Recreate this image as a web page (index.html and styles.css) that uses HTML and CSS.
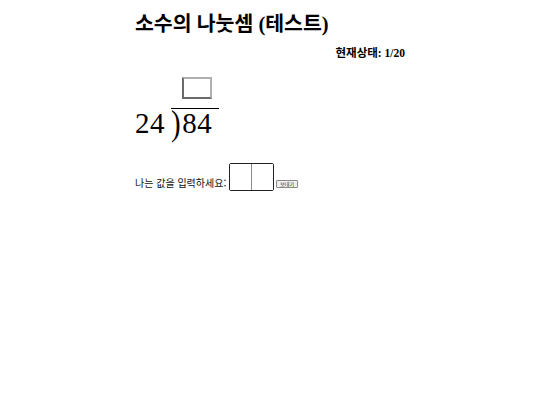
FILE: index.html
```html
<!DOCTYPE html>
<html lang="ko">
<head>
<meta charset="utf-8">
<link rel="stylesheet" href="styles.css">
</head>
<body>
<div class="page">
  <h1 class="title">소수의 나눗셈 (테스트)</h1>
  <div class="status">현재상태: 1/20</div>
  <div class="division">
    <input class="quotient" type="text">
    <div class="problem"><span class="divisor">24</span><span class="bracket"><span class="paren">)</span>84</span></div>
  </div>
  <div class="answer-row">
    <span class="label">나는 값을 입력하세요:</span>
    <span class="boxes"><input class="digit first" type="text"><input class="digit" type="text"></span>
    <button class="send">보내기</button>
  </div>
</div>
</body>
</html>
```
FILE: styles.css
```css
body {
  margin: 0;
  font-family: "Liberation Serif", "Noto Sans CJK KR", serif;
  background: #fff;
  color: #000;
}
.page {
  width: 270px;
  margin: 0 auto;
  padding-top: 12px;
}
.title {
  margin: 0;
  font-size: 20.5px;
  font-weight: bold;
  line-height: 24px;
}
.status {
  text-align: right;
  font-weight: bold;
  font-size: 11.5px;
  line-height: 14px;
  margin-top: 10px;
}
.division {
  margin-top: 17px;
}
.quotient {
  display: block;
  margin: 0 0 9px 47px;
  width: 26px;
  height: 18px;
  padding: 0;
  box-sizing: content-box;
  border: 2px solid;
  border-color: #b0b0b0 #b0b0b0 #6a6a6a #6a6a6a;
  background: #fff;
}
.problem {
  font-size: 29px;
  line-height: 28px;
  white-space: nowrap;
}
.divisor {
  margin-right: 6px;
  letter-spacing: 0.5px;
}
.bracket {
  display: inline-block;
  line-height: 28px;
  border-top: 1px solid #000;
  padding-right: 7px;
  letter-spacing: 0.5px;
}
.paren {
  display: inline-block;
  line-height: 28px;
  margin-right: 1px;
  transform: scaleY(1.27);
  transform-origin: 50% 64%;
}
.answer-row {
  margin-top: 26px;
  display: flex;
  align-items: flex-end;
}
.label {
  font-size: 10px;
  line-height: 14px;
  font-family: "Noto Sans CJK KR", sans-serif;
  color: #111;
  margin-right: 3px;
  margin-bottom: 1px;
}
.boxes {
  display: flex;
  border: 1px solid #222;
  border-radius: 2px;
}
.digit {
  width: 21px;
  height: 26px;
  padding: 0;
  border: none;
  background: #fff;
}
.digit.first {
  border-right: 1px solid #8c8c8c;
}
.send {
  font-family: "Noto Sans CJK KR", sans-serif;
  font-size: 5px;
  line-height: 6px;
  padding: 0 3px;
  margin-left: 2px;
  margin-bottom: 3px;
  height: 8px;
  border: 1px solid #8a8a8a;
  border-radius: 1px;
  background: #efefef;
  color: #222;
}
```
